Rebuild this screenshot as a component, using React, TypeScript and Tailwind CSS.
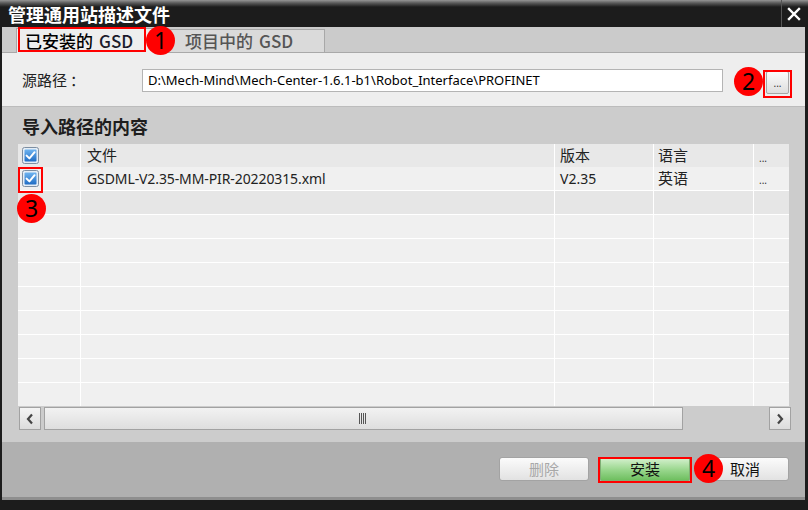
import React from "react";

function Check() {
  return (
    <svg width="17" height="17" viewBox="0 0 17 17">
      <defs>
        <linearGradient id="cbg" x1="0" y1="0" x2="0" y2="1">
          <stop offset="0" stopColor="#6fb4f0" />
          <stop offset="1" stopColor="#1e6cc4" />
        </linearGradient>
      </defs>
      <rect x="0.5" y="0.5" width="16" height="16" rx="2" fill="#e4edf6" stroke="#7e8fa2" />
      <rect x="2.5" y="2.5" width="12" height="12" rx="1" fill="url(#cbg)" />
      <path d="M4.6 8.6 L7.4 11.4 L12.6 5.2" stroke="#ffffff" strokeWidth="2" fill="none" strokeLinecap="round" strokeLinejoin="round" />
    </svg>
  );
}

function Badge({ n, left, top }: { n: string; left: number; top: number }) {
  return (
    <div
      className="absolute w-[29px] h-[29px] rounded-full bg-[#ff0000] flex items-center justify-center text-[23px] leading-none text-black"
      style={{ left, top }}
    >
      {n}
    </div>
  );
}

function RedBox({ left, top, w, h }: { left: number; top: number; w: number; h: number }) {
  return <div className="absolute border-2 border-[#ff0000]" style={{ left, top, width: w, height: h }} />;
}

const cols = "grid grid-cols-[62px_473px_98px_99px_35px] gap-x-px";

export default function App() {
  const rows = Array.from({ length: 10 });
  return (
    <div className="relative w-[808px] h-[510px] flex flex-col bg-[#1c1c1c] overflow-hidden font-['Noto_Sans','Noto_Sans_CJK_SC',sans-serif]">
      {/* title bar */}
      <div className="h-[27px] shrink-0 flex items-stretch bg-[linear-gradient(to_bottom,#959595_0px,#5a5a5a_3px,#1c1c1c_7px)]">
        <div className="pl-[8px] flex items-center text-white font-bold text-[18px] leading-none font-['Noto_Sans_CJK_SC',sans-serif]">
          管理通用站描述文件
        </div>
        <div className="ml-auto mr-[3px] w-[24px] flex items-center justify-center border-l border-[#555]">
          <svg width="14" height="14" viewBox="0 0 14 14">
            <path d="M2 2 L12 12 M12 2 L2 12" stroke="#ffffff" strokeWidth="2.4" strokeLinecap="square" />
          </svg>
        </div>
      </div>

      {/* body */}
      <div className="flex-1 flex flex-col ml-[2px] mr-[3px] bg-[#cccccc]">
        {/* tab strip */}
        <div className="h-[26px] shrink-0 flex items-end pl-[14px] bg-[#cbcbcb] border-b border-[#a9a9a9]">
          <div className="h-[25px] w-[152px] flex items-center pl-[8px] bg-[#eeeeee] border border-b-0 border-[#a8a8a8] text-[17px] font-medium text-black mb-[-1px] font-['Noto_Sans_CJK_SC',sans-serif]">
            已安装的 <span className="ml-[6px] text-[#1a1a2a]">GSD</span>
          </div>
          <div className="h-[23px] w-[157px] flex items-center pl-[16px] bg-[#dadada] border border-b-0 border-[#a8a8a8] text-[17px] font-medium text-[#555] font-['Noto_Sans_CJK_SC',sans-serif]">
            项目中的 <span className="ml-[6px]">GSD</span>
          </div>
        </div>

        {/* source path */}
        <div className="h-[54px] shrink-0 flex items-start pt-[16px] bg-[#eeeeee] border-b border-[#bcbcbc]">
          <div className="w-[140px] pl-[20px] h-[22px] flex items-center text-[15px] text-[#222] font-['Noto_Sans_CJK_SC',sans-serif]">
            源路径<span className="ml-[3px]">：</span>
          </div>
          <div className="w-[581px] h-[23px] bg-white border border-[#b4b4b4] flex items-center pl-[5px] text-[13px] text-black">
            D:\Mech-Mind\Mech-Center-1.6.1-b1\Robot_Interface\PROFINET
          </div>
          <div className="ml-[43px] mt-[2px] w-[23px] h-[23px] rounded-[2px] border border-[#a6a6a6] bg-[linear-gradient(#fbfbfb,#dedede)] flex items-end justify-center pb-[5px] text-[10px] leading-none text-[#333]">
            ...
          </div>
        </div>

        {/* import content */}
        <div className="h-[335px] shrink-0 flex flex-col bg-[#cccccc] px-[16px]">
          <div className="h-[37px] flex items-center pl-[4px] pt-[1px] text-[18px] font-bold text-[#1e1e1e] font-['Noto_Sans_CJK_SC',sans-serif]">
            导入路径的内容
          </div>
          <div className="w-[771px] flex flex-col gap-y-px bg-white">
            <div className={`${cols} h-[22px]`}>
              <div className="bg-[#e8e8e8] flex items-center pl-[4px]">
                <Check />
              </div>
              <div className="bg-[#e8e8e8] flex items-center pl-[6px] text-[15px] text-[#222] font-['Noto_Sans_CJK_SC',sans-serif]">文件</div>
              <div className="bg-[#e8e8e8] flex items-center pl-[5px] text-[15px] text-[#222] font-['Noto_Sans_CJK_SC',sans-serif]">版本</div>
              <div className="bg-[#e8e8e8] flex items-center pl-[4px] text-[15px] text-[#222] font-['Noto_Sans_CJK_SC',sans-serif]">语言</div>
              <div className="bg-[#e8e8e8] flex items-end pb-[4px] pl-[5px] text-[10px] leading-none text-[#333]">...</div>
            </div>
            {rows.map((_, i) => (
              <div key={i} className={`${cols} h-[23px]`}>
                {i === 0 ? (
                  <>
                    <div className="bg-[#f0f0f0] flex items-center pl-[4px]">
                      <Check />
                    </div>
                    <div className="bg-[#f0f0f0] flex items-center pl-[6px] text-[14px] tracking-[-0.1px] text-[#222]">
                      GSDML-V2.35-MM-PIR-20220315.xml
                    </div>
                    <div className="bg-[#f0f0f0] flex items-center pl-[5px] text-[14px] text-[#222]">V2.35</div>
                    <div className="bg-[#f0f0f0] flex items-center pl-[4px] text-[15px] text-[#222] font-['Noto_Sans_CJK_SC',sans-serif]">英语</div>
                    <div className="bg-[#f0f0f0] flex items-end pb-[5px] pl-[5px] text-[10px] leading-none text-[#333]">...</div>
                  </>
                ) : (
                  Array.from({ length: 5 }).map((__, j) => (
                    <div key={j} className={i === 1 ? "bg-[#e6e6e6]" : "bg-[#f0f0f0]"} />
                  ))
                )}
              </div>
            ))}
          </div>
          {/* horizontal scrollbar */}
          <div className="mt-[1px] w-[773px] h-[23px] flex items-stretch gap-[3px]">
            <div className="w-[22px] ml-[1px] border border-[#a2a2a2] bg-[linear-gradient(#f4f4f4,#dcdcdc)] flex items-center justify-center">
              <svg width="8" height="12" viewBox="0 0 8 12">
                <path d="M6 1.5 L2 6 L6 10.5" stroke="#444" strokeWidth="2.2" fill="none" />
              </svg>
            </div>
            <div className="w-[639px] border border-[#a2a2a2] bg-[linear-gradient(#f2f2f2,#dedede)] flex items-center justify-center">
              <svg width="9" height="11" viewBox="0 0 9 11">
                <path d="M0.5 0 V11 M2.5 0 V11 M4.5 0 V11 M6.5 0 V11" stroke="#555" strokeWidth="1" />
              </svg>
            </div>
            <div className="ml-auto w-[22px] border border-[#a2a2a2] bg-[linear-gradient(#f4f4f4,#dcdcdc)] flex items-center justify-center">
              <svg width="8" height="12" viewBox="0 0 8 12">
                <path d="M2 1.5 L6 6 L2 10.5" stroke="#444" strokeWidth="2.2" fill="none" />
              </svg>
            </div>
          </div>
        </div>

        {/* bottom buttons */}
        <div className="flex-1 bg-[#b0b0b0] flex items-start justify-end pt-[15px] pr-[16px] gap-[11px] border-b-[3px] border-[#8e8e8e] font-['Noto_Sans_CJK_SC',sans-serif]">
          <div className="w-[90px] h-[24px] rounded-[3px] border border-[#a3a3a3] bg-[linear-gradient(#fbfbfb,#e2e2e2)] flex items-center justify-center text-[15px] text-[#a8a8a8]">
            删除
          </div>
          <div className="w-[90px] h-[24px] rounded-[2px] border border-[#7fae74] bg-[linear-gradient(#d6f1cf,#98d68c_55%,#6fbf60)] flex items-center justify-center text-[15px] text-[#111]">
            安装
          </div>
          <div className="w-[88px] h-[24px] rounded-[3px] border border-[#a3a3a3] bg-[linear-gradient(#fbfbfb,#e2e2e2)] flex items-center justify-center text-[15px] text-[#111]">
            取消
          </div>
        </div>
      </div>
      <div className="h-[10px] shrink-0 bg-[#1c1c1c]" />

      {/* annotations */}
      <RedBox left={18} top={27} w={128} h={25} />
      <RedBox left={763} top={70} w={29} h={28} />
      <RedBox left={18} top={167} w={25} h={26} />
      <RedBox left={598} top={457} w={94} h={26} />
      <Badge n="1" left={146} top={26} />
      <Badge n="2" left={734} top={67} />
      <Badge n="3" left={17} top={194} />
      <Badge n="4" left={694} top={454} />
    </div>
  );
}
